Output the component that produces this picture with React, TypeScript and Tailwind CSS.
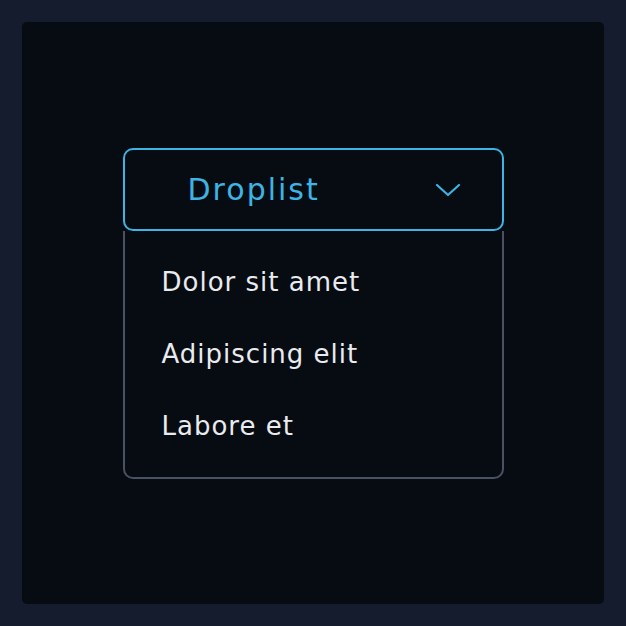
export default function App() {
  const items = ["Dolor sit amet", "Adipiscing elit", "Labore et"];
  return (
    <div className="w-[626px] h-[626px] bg-[#151c2e] p-[22px]" style={{ fontFamily: '"DejaVu Sans", sans-serif' }}>
      <div className="w-[582px] h-[582px] rounded-[5px] bg-[#070b12] flex flex-col items-center pt-[126px]">
        <div className="w-[381px]">
          <div className="h-[83px] rounded-[10px] border-2 border-[#3cb4e4] flex items-center justify-between pl-[63px] pr-[41px]">
            <span className="text-[30px] font-normal text-[#3cb4e4] tracking-[2px]">Droplist</span>
            <svg width="26" height="16" viewBox="0 0 26 16" fill="none">
              <path d="M2 3 L13 13 L24 3" stroke="#3cb4e4" strokeWidth="2.2" strokeLinecap="round" strokeLinejoin="round" />
            </svg>
          </div>
          <div className="border-2 border-t-0 border-[#4a5163] rounded-b-[10px] py-[15px]">
            {items.map((t) => (
              <div key={t} className="h-[72px] leading-[72px] pl-[37px] text-[26px] font-normal text-[#e9ebef] tracking-[1px]">
                {t}
              </div>
            ))}
          </div>
        </div>
      </div>
    </div>
  );
}
